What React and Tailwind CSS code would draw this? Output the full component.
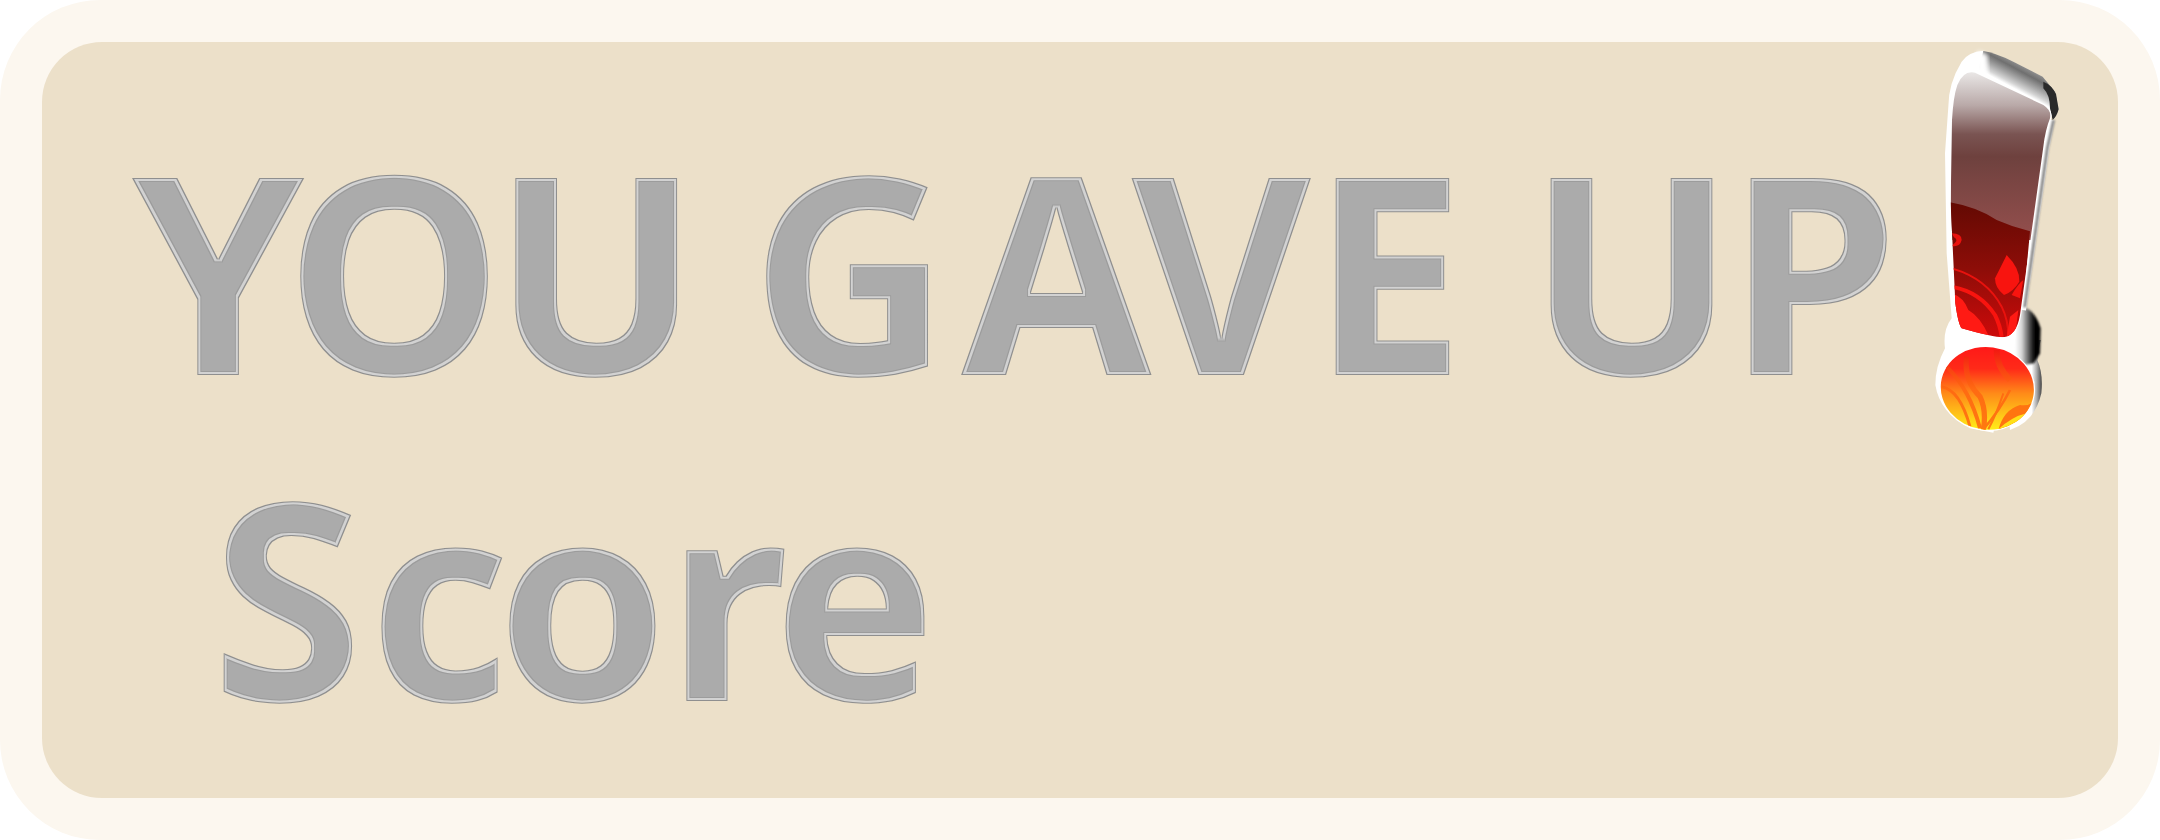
import React from "react";

function Bang() {
  return (
    <svg viewBox="0 0 840 1320" className="absolute left-[1838px] top-[-22px] w-[280px] h-[440px]">
      <defs>
        <linearGradient id="bev" x1="405" y1="118" x2="368" y2="187" gradientUnits="userSpaceOnUse">
          <stop offset="0" stopColor="#9a9a9a" />
          <stop offset="0.3" stopColor="#6f6f6f" />
          <stop offset="0.6" stopColor="#a5a5a5" />
          <stop offset="0.85" stopColor="#d5d5d5" />
          <stop offset="1" stopColor="#ffffff" />
        </linearGradient>
        <linearGradient id="neck" x1="405" y1="0" x2="470" y2="0" gradientUnits="userSpaceOnUse">
          <stop offset="0" stopColor="#ffffff" />
          <stop offset="0.3" stopColor="#d8d8d8" />
          <stop offset="0.85" stopColor="#0c0c0c" />
          <stop offset="1" stopColor="#000000" />
        </linearGradient>
        <linearGradient id="ballSide" x1="455" y1="0" x2="486" y2="0" gradientUnits="userSpaceOnUse">
          <stop offset="0" stopColor="#ffffff" />
          <stop offset="0.5" stopColor="#a8a8a8" />
          <stop offset="1" stopColor="#404040" />
        </linearGradient>
        <linearGradient id="red" x1="0" y1="550" x2="0" y2="950" gradientUnits="userSpaceOnUse">
          <stop offset="0" stopColor="#640a03" />
          <stop offset="0.5" stopColor="#8e0d08" />
          <stop offset="1" stopColor="#cc0a0a" />
        </linearGradient>
        <linearGradient id="glass" x1="0" y1="160" x2="0" y2="640" gradientUnits="userSpaceOnUse">
          <stop offset="0" stopColor="#e8e5e4" />
          <stop offset="0.2" stopColor="#b9a9a8" />
          <stop offset="0.38" stopColor="#7a5452" />
          <stop offset="0.52" stopColor="#6e413e" />
          <stop offset="1" stopColor="#924e4c" />
        </linearGradient>
        <linearGradient id="fire" x1="0" y1="985" x2="0" y2="1230" gradientUnits="userSpaceOnUse">
          <stop offset="0" stopColor="#ff1a18" />
          <stop offset="0.25" stopColor="#ff2a18" />
          <stop offset="0.55" stopColor="#ff8a18" />
          <stop offset="1" stopColor="#ffee18" />
        </linearGradient>
        <linearGradient id="swirl" x1="0" y1="985" x2="0" y2="1230" gradientUnits="userSpaceOnUse">
          <stop offset="0" stopColor="#f21612" />
          <stop offset="0.5" stopColor="#ff6a12" />
          <stop offset="1" stopColor="#ff7a10" />
        </linearGradient>
        <clipPath id="glassClip">
          <path d="M232 195Q250 150 285 158L490 255Q516 272 510 295Q496 330 490 380L420 885Q410 948 368 952Q340 952 245 925Q235 915 226 850L212 550L216 300Q220 230 232 195Z" />
        </clipPath>
        <clipPath id="ballClip">
          <ellipse cx="322" cy="1105" rx="140" ry="124" transform="rotate(8 322 1105)" />
        </clipPath>
        <filter id="soft"><feGaussianBlur stdDeviation="2" /></filter>
        <filter id="soft2"><feGaussianBlur stdDeviation="7" /></filter>
        <filter id="soft3"><feGaussianBlur stdDeviation="3.5" /></filter>
      </defs>

      {/* back of the ball and neck */}
      <path d="M400 960L482 960Q474 1000 472 1020Q490 1060 484 1120Q465 1205 390 1230L380 1120Z" fill="url(#ballSide)" filter="url(#soft)" />
      <path d="M390 880L436 862Q470 880 482 925L480 1000L462 1030L400 1040Z" fill="url(#neck)" filter="url(#soft3)" />
      {/* lit shell */}
      <path d="M310 92Q265 95 245 125Q205 190 205 260L195 400L200 700L215 895Q188 930 195 985Q166 1040 166 1095Q180 1180 270 1225L340 1238L400 1000L415 880L300 180Z" fill="#ffffff" filter="url(#soft)" />
      {/* top bevel */}
      <path d="M310 93Q345 98 400 125L488 170L525 215L536 268Q528 290 510 290L290 170Z" fill="url(#bev)" filter="url(#soft)" />
      <path d="M295 92Q280 125 295 165L325 180L322 105Z" fill="#ffffff" filter="url(#soft2)" />
      <path d="M490 185Q515 195 528 222L536 268Q530 290 518 300L510 265Q510 225 490 205Z" fill="#2a2a2a" filter="url(#soft)" />
      {/* right side bevel */}
      <path d="M514 300L498 385L428 870" fill="none" stroke="#ffffff" strokeWidth="20" filter="url(#soft)" />
      <path d="M521 300L502 385L434 862" fill="none" stroke="#7a7a7a" strokeWidth="8" filter="url(#soft3)" />

      {/* glass stem */}
      <path d="M232 195Q250 150 285 158L490 255Q516 272 510 295Q496 330 490 380L420 885Q410 948 368 952Q340 952 245 925Q235 915 226 850L212 550L216 300Q220 230 232 195Z" fill="#ffffff" stroke="#ffffff" strokeWidth="7" />
      <g clipPath="url(#glassClip)">
        <rect x="200" y="140" width="330" height="520" fill="url(#glass)" />
        <path d="M205 546Q290 560 350 600Q400 622 450 634L420 960L200 960Z" fill="url(#red)" />
        <path d="M345 775Q365 735 380 705Q420 745 418 785Q400 815 372 825Q345 805 345 775Z" fill="#f8140f" />
        <path d="M395 825Q415 790 430 780L420 835Z" fill="#f8140f" />
        <path d="M215 640Q245 640 245 660Q240 682 215 678L225 668Q235 660 222 652Z" fill="#e8120e" />
        <path d="M215 745Q320 775 365 860Q385 900 385 950" fill="none" stroke="#e8120e" strokeWidth="6" />
        <path d="M215 800Q300 815 345 885Q360 915 365 950" fill="none" stroke="#f8140f" strokeWidth="12" />
        <path d="M215 820Q250 830 265 870Q300 890 325 945L230 935Z" fill="#ff1a14" />
        <path d="M390 890L415 870L405 950L380 950Z" fill="#ff1a14" />
      </g>

      {/* fire ball */}
      <ellipse cx="322" cy="1105" rx="140" ry="124" transform="rotate(8 322 1105)" fill="#ffffff" stroke="#ffffff" strokeWidth="7" />
      <g clipPath="url(#ballClip)">
        <rect x="170" y="975" width="300" height="265" fill="url(#fire)" />
        <g fill="none" stroke="url(#swirl)">
          <path d="M185 1100Q240 1110 270 1220" strokeWidth="9" />
          <path d="M200 1040Q270 1110 300 1225" strokeWidth="12" />
          <path d="M260 1010Q250 1080 300 1130Q320 1170 310 1230" strokeWidth="16" />
          <path d="M390 1110Q360 1170 310 1228" strokeWidth="8" />
          <path d="M370 1120Q350 1180 325 1228" strokeWidth="6" />
          <path d="M350 990Q350 1040 390 1080" strokeWidth="18" />
        </g>
        <path d="M355 1230Q370 1170 420 1155Q445 1160 470 1140L470 1240Z" fill="#ff7410" />
        <path d="M350 1232Q395 1190 440 1180L420 1240Z" fill="#ffe018" />
      </g>
    </svg>
  );
}

export default function App() {
  return (
    <div className="w-[2160px] h-[840px] bg-white overflow-hidden">
      <svg className="absolute w-0 h-0">
        <filter id="emboss" x="-5%" y="-5%" width="110%" height="110%" colorInterpolationFilters="sRGB">
          <feMorphology in="SourceAlpha" operator="erode" radius="1" result="e1" />
          <feMorphology in="SourceAlpha" operator="erode" radius="3" result="e3" />
          <feMorphology in="SourceAlpha" operator="erode" radius="4" result="e4" />
          <feFlood floodColor="#8f8f8f" result="c0" />
          <feComposite in="c0" in2="SourceAlpha" operator="in" result="l0" />
          <feFlood floodColor="#d2d2d2" result="c1" />
          <feComposite in="c1" in2="e1" operator="in" result="l1" />
          <feFlood floodColor="#9c9c9c" result="c2" />
          <feComposite in="c2" in2="e3" operator="in" result="l2" />
          <feFlood floodColor="#ababab" result="c3" />
          <feComposite in="c3" in2="e4" operator="in" result="l3" />
          <feMerge result="m">
            <feMergeNode in="l0" />
            <feMergeNode in="l1" />
            <feMergeNode in="l2" />
            <feMergeNode in="l3" />
          </feMerge>
          <feGaussianBlur in="m" stdDeviation="0.6" />
        </filter>
      </svg>
      <div className="w-full h-full rounded-[100px] bg-[#fcf7ef] p-[42px]">
        <div className="relative w-full h-full rounded-[60px] bg-[#ece0c9] flex flex-col pt-[63px] pl-[90px]">
          <Bang />
          <div className="font-['Open_Sans',sans-serif] font-bold text-[276px] leading-[326px] text-[#ababab] whitespace-nowrap [filter:url(#emboss)]">
            <div>
              <span className="tracking-[-20px]">Y</span>
              <span className="tracking-[-12px]">O</span>
              <span className="tracking-[-11px]">U </span>
              <span className="tracking-[11px]">G</span>
              <span className="tracking-[-20px]">A</span>
              <span className="tracking-[0px]">V</span>
              <span className="tracking-[-5px]">E </span>
              <span className="tracking-[-10px]">U</span>
              <span>P</span>
            </div>
            <div className="ml-[79px]">
              <span className="tracking-[6px]">S</span>
              <span className="tracking-[-14px]">c</span>
              <span className="tracking-[-3px]">o</span>
              <span className="tracking-[-17px]">r</span>
              <span>e</span>
            </div>
          </div>
        </div>
      </div>
    </div>
  );
}
